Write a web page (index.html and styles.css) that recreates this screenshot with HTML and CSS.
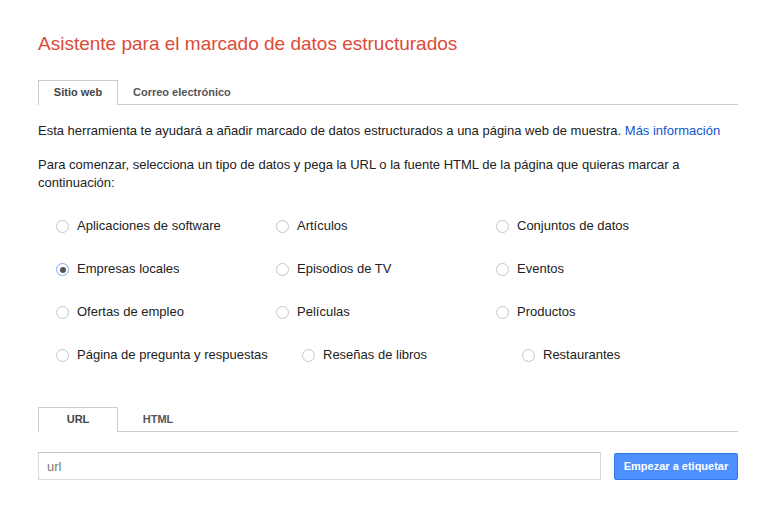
FILE: index.html
```html
<!DOCTYPE html>
<html lang="es">
<head>
    <meta charset="UTF-8">
    <meta name="viewport" content="width=device-width, initial-scale=1.0">
    <title>Asistente para el marcado de datos estructurados</title>
    <link rel="stylesheet" href="styles.css">
</head>
<body>
    <div class="page">
        <h1>Asistente para el marcado de datos estructurados</h1>

        <div class="tabs">
            <div class="tab active">Sitio web</div>
            <div class="tab">Correo electrónico</div>
        </div>

        <p class="intro">Esta herramienta te ayudará a añadir marcado de datos estructurados a una página web de muestra. <a href="#">Más información</a></p>
        <p class="intro">Para comenzar, selecciona un tipo de datos y pega la URL o la fuente HTML de la página que quieras marcar a continuación:</p>

        <div class="options">
            <label class="option"><input type="radio" name="type"> Aplicaciones de software</label>
            <label class="option"><input type="radio" name="type"> Artículos</label>
            <label class="option"><input type="radio" name="type"> Conjuntos de datos</label>

            <label class="option"><input type="radio" name="type" checked> Empresas locales</label>
            <label class="option"><input type="radio" name="type"> Episodios de TV</label>
            <label class="option"><input type="radio" name="type"> Eventos</label>

            <label class="option"><input type="radio" name="type"> Ofertas de empleo</label>
            <label class="option"><input type="radio" name="type"> Películas</label>
            <label class="option"><input type="radio" name="type"> Productos</label>

            <label class="option wide"><input type="radio" name="type"> Página de pregunta y respuestas</label>
            <label class="option"><input type="radio" name="type"> Reseñas de libros</label>
            <label class="option last"><input type="radio" name="type"> Restaurantes</label>
        </div>

        <div class="tabs source-tabs">
            <div class="tab active">URL</div>
            <div class="tab">HTML</div>
        </div>

        <div class="url-row">
            <input type="text" class="url-input" placeholder="url">
            <button class="start-btn">Empezar a etiquetar</button>
        </div>
    </div>
</body>
</html>
```

FILE: styles.css
```css
* { margin: 0; padding: 0; box-sizing: border-box; }

body {
    font-family: "Liberation Sans", Arial, Helvetica, sans-serif;
    background: #fff;
    color: #222;
    font-size: 13px;
}

.page {
    width: 700px;
    margin-left: 38px;
    padding-top: 32px;
}

h1 {
    font-size: 19px;
    font-weight: normal;
    line-height: 24px;
    color: #dd4b39;
}

.tabs {
    display: flex;
    margin-top: 24px;
    border-bottom: 1px solid #ccc;
    height: 25px;
}

.tab {
    min-width: 80px;
    height: 25px;
    padding: 0 14px;
    line-height: 23px;
    text-align: center;
    font-size: 11px;
    font-weight: bold;
    color: #555;
    border: 1px solid transparent;
    border-bottom: none;
}

.tab.active {
    border-color: #ccc;
    background: #fff;
    color: #444;
    height: 25px;
    margin-bottom: -1px;
}

.intro {
    line-height: 18px;
    margin-top: 16px;
}

.tabs + .intro {
    margin-top: 17px;
}

.intro a {
    color: #15c;
    text-decoration: none;
}

.options {
    display: flex;
    flex-wrap: wrap;
    row-gap: 25px;
    margin-top: 25px;
    padding-left: 18px;
}

.option {
    width: 220px;
    display: flex;
    align-items: center;
    gap: 8px;
    line-height: 18px;
    cursor: pointer;
}

.option.wide {
    width: 246px;
}

.option.last {
    width: auto;
}

.option input {
    appearance: none;
    -webkit-appearance: none;
    width: 13px;
    height: 13px;
    margin: 1px 0 0 0;
    border: 1px solid #c6c6c6;
    border-radius: 50%;
    background: #fff;
    display: flex;
    align-items: center;
    justify-content: center;
    flex-shrink: 0;
}

.option input:checked {
    border-color: #7fa7f5;
}

.option input:checked::after {
    content: "";
    width: 6px;
    height: 6px;
    border-radius: 50%;
    background: #555;
}

.source-tabs {
    margin-top: 43px;
}

.url-row {
    display: flex;
    align-items: center;
    gap: 13px;
    margin-top: 20px;
}

.url-input {
    flex: 1;
    height: 28px;
    border: 1px solid #d9d9d9;
    border-top-color: #c0c0c0;
    padding: 0 8px;
    font-family: inherit;
    font-size: 13px;
    color: #222;
    outline: none;
}

.url-input::placeholder {
    color: #777;
}

.start-btn {
    width: 124px;
    height: 27px;
    background: #4d90fe;
    border: 1px solid #3079ed;
    border-radius: 2px;
    color: #fff;
    font-family: inherit;
    font-size: 11px;
    font-weight: bold;
    cursor: pointer;
}
```
